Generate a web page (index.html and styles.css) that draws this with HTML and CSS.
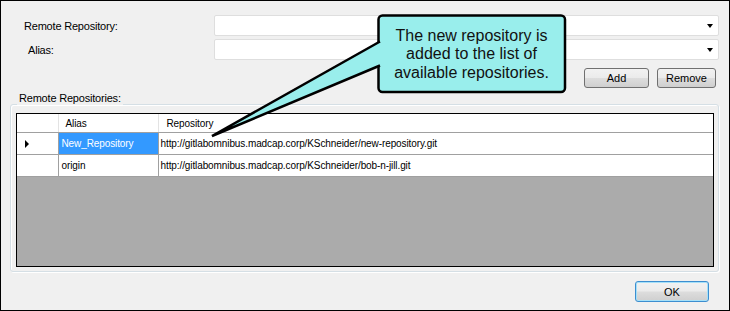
FILE: index.html
```html
<!DOCTYPE html>
<html lang="en">
<head>
    <meta charset="UTF-8">
    <title>Remote Repositories</title>
    <link rel="stylesheet" href="styles.css">
</head>
<body>
    <div class="dialog">
        <div class="fields">
            <div class="field-row">
                <label class="field-label">Remote Repository:</label>
                <div class="combo"><span class="combo-arrow"></span></div>
            </div>
            <div class="field-row">
                <label class="field-label alias-label">Alias:</label>
                <div class="combo"><span class="combo-arrow"></span></div>
            </div>
        </div>

        <div class="actions">
            <button class="btn btn-add">Add</button>
            <button class="btn btn-remove">Remove</button>
        </div>

        <div class="group">
            <div class="group-title">Remote Repositories:</div>
            <div class="grid">
                <table>
                    <colgroup>
                        <col class="col-head">
                        <col class="col-alias">
                        <col>
                    </colgroup>
                    <thead>
                        <tr>
                            <th class="corner"></th>
                            <th>Alias</th>
                            <th class="repo-head">Repository</th>
                        </tr>
                    </thead>
                    <tbody>
                        <tr>
                            <td class="row-head"><span class="row-marker"></span></td>
                            <td class="selected">New_Repository</td>
                            <td>http://gitlabomnibus.madcap.corp/KSchneider/new-repository.git</td>
                        </tr>
                        <tr>
                            <td class="row-head"></td>
                            <td>origin</td>
                            <td>http://gitlabomnibus.madcap.corp/KSchneider/bob-n-jill.git</td>
                        </tr>
                    </tbody>
                </table>
            </div>
        </div>

        <div class="footer">
            <button class="btn btn-ok">OK</button>
        </div>

        <!-- callout overlay -->
        <svg class="callout-shape" width="730" height="311" viewBox="0 0 730 311">
            <rect x="378.5" y="15.5" width="186.5" height="76.5" rx="4" fill="#99eeec" stroke="#000" stroke-width="2.5"/>
            <path d="M380 41.5 L212 136 L380 65.5" fill="#99eeec" stroke="#000" stroke-width="2.5"/>
        </svg>
        <div class="callout-text">The new repository is<br>added to the list of<br>available repositories.</div>
    </div>
</body>
</html>
```

FILE: styles.css
```css
body {
    margin: 0;
    font-family: 'Liberation Sans', Arial, sans-serif;
    background-color: #fff;
}

.dialog {
    position: relative;
    width: 730px;
    height: 311px;
    box-sizing: border-box;
    border: 1px solid #000;
    background-color: #f0f0f0;
    font-size: 11px;
    color: #000;
}

.fields {
    display: flex;
    flex-direction: column;
    gap: 3px;
    padding-top: 14px;
}

.field-row {
    display: flex;
    align-items: center;
    padding: 0 10px 0 23px;
}

.field-label {
    flex: 1;
    letter-spacing: -0.2px;
}

.alias-label {
    padding-left: 4px;
}

.combo {
    display: flex;
    align-items: center;
    justify-content: flex-end;
    width: 505px;
    height: 21px;
    box-sizing: border-box;
    padding-right: 5px;
    border: 1px solid #dedede;
    border-radius: 2px;
    background-color: #fff;
}

.combo-arrow {
    border-left: 3.5px solid transparent;
    border-right: 3.5px solid transparent;
    border-top: 4px solid #000;
}

.actions {
    display: flex;
    justify-content: flex-end;
    gap: 8px;
    margin-top: 8px;
    padding-right: 13px;
}

.btn {
    height: 20px;
    box-sizing: border-box;
    padding: 0;
    border: 1px solid #707070;
    border-radius: 3px;
    background: linear-gradient(#f2f2f2 0%, #ebebeb 48%, #dddddd 52%, #cfcfcf 100%);
    font-family: inherit;
    font-size: 11px;
    color: #000;
}

.btn-add {
    width: 65px;
}

.btn-remove {
    width: 59px;
}

.group {
    margin: 16px 10px 0 9px;
    padding: 0 4px 4px 5px;
    border: 1px solid #d5dfe5;
    border-radius: 3px;
    box-shadow: inset 1px 1px 0 #fff, 1px 1px 0 #fff;
}

.group-title {
    width: fit-content;
    margin: -13px 0 0 1px;
    padding: 0 2px;
    line-height: 13px;
    background-color: #f0f0f0;
    letter-spacing: -0.2px;
}

.grid {
    margin-top: 8px;
    height: 154px;
    box-sizing: border-box;
    border: 1px solid #000;
    background-color: #ababab;
}

.grid table {
    width: 100%;
    border-collapse: collapse;
    table-layout: fixed;
    font-size: 10px;
    letter-spacing: -0.1px;
}

.col-head {
    width: 41px;
}

.col-alias {
    width: 100px;
}

.grid th {
    height: 18px;
    padding: 0 0 0 7px;
    background-color: #fff;
    border-right: 1px solid #e3e3e3;
    border-bottom: 1px solid #a0a0a0;
    font-weight: normal;
    text-align: left;
}

.grid th.repo-head {
    padding-left: 8px;
    border-right: none;
}

.grid td {
    height: 21px;
    padding: 0 0 0 3px;
    background-color: #fff;
    border-right: 1px solid #a0a0a0;
    border-bottom: 1px solid #a0a0a0;
    white-space: nowrap;
}

.grid td:last-child {
    padding-left: 2px;
    border-right: none;
}

.grid td.row-head {
    padding-left: 8px;
}

.row-marker {
    display: block;
    width: 0;
    height: 0;
    border-top: 4px solid transparent;
    border-bottom: 4px solid transparent;
    border-left: 4px solid #000;
}

.grid td.selected {
    background-color: #3399ff;
    color: #fff;
}

.footer {
    display: flex;
    justify-content: flex-end;
    padding: 9px 20px 0 0;
}

.btn-ok {
    width: 74px;
    height: 21px;
    border-color: #3c8ed0;
    box-shadow: inset 0 0 0 1px #a6e0f8;
}

.callout-shape {
    position: absolute;
    left: -1px;
    top: -1px;
    pointer-events: none;
}

.callout-text {
    position: absolute;
    left: 377px;
    top: 15px;
    width: 187px;
    height: 77px;
    display: flex;
    align-items: center;
    justify-content: center;
    text-align: center;
    font-family: 'Liberation Sans', Arial, sans-serif;
    font-size: 16px;
    line-height: 18.5px;
    color: #111;
}
```
